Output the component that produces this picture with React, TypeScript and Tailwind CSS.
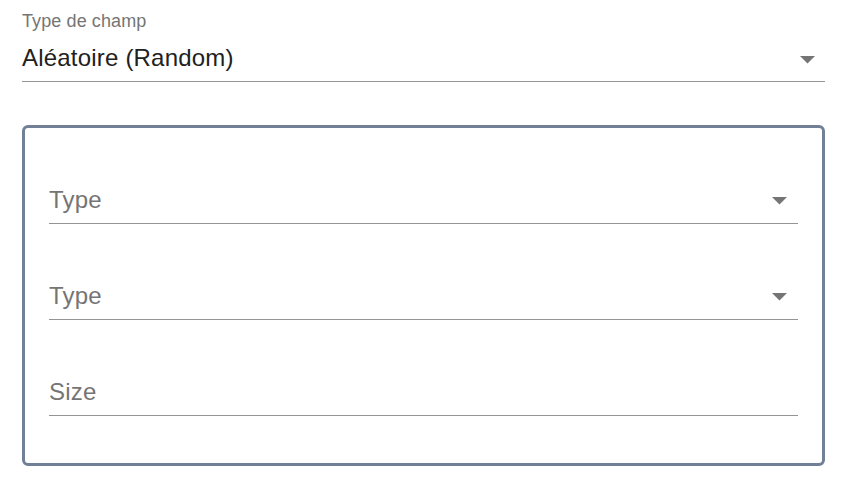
import React from "react";

function Arrow({ className }: { className?: string }) {
  return (
    <svg width="15" height="8" viewBox="0 0 15 8" className={className}>
      <polygon points="0,0 15,0 7.5,7.5" fill="#757575" />
    </svg>
  );
}

function InnerField({ label, select, last }: { label: string; select?: boolean; last?: boolean }) {
  return (
    <div className={last ? "" : "mb-[59px]"}>
      <div className="flex h-[24px] items-start justify-between">
        <span className="mt-px text-[24px] leading-[24px] tracking-[0.2px] text-[#757575]">{label}</span>
        {select && <Arrow className="mr-[11px] mt-[10px]" />}
      </div>
      <div className="mt-[12px] h-px bg-[#949494]" />
    </div>
  );
}

export default function App() {
  return (
    <div
      className="min-h-[488px] w-[848px] bg-white pl-[22px]"
      style={{ fontFamily: '"Liberation Sans", Arial, sans-serif' }}
    >
      <div className="w-[803px] pt-[12px]">
        <div className="h-[18px] text-[18px] leading-[18px] tracking-[0.1px] text-[#757575]">Type de champ</div>
        <div className="mt-[15px] flex h-[24px] items-start justify-between">
          <span className="mt-px text-[24px] leading-[24px] tracking-[0.2px] text-[#212121]">Aléatoire (Random)</span>
          <Arrow className="mr-[10px] mt-[11px]" />
        </div>
        <div className="mt-[12px] h-px bg-[#949494]" />
      </div>
      <div className="mt-[43px] h-[341px] w-[803px] rounded-[6px] border-[3px] border-[#718096] px-[24px] pt-[59px]">
        <InnerField label="Type" select />
        <InnerField label="Type" select />
        <InnerField label="Size" last />
      </div>
    </div>
  );
}
